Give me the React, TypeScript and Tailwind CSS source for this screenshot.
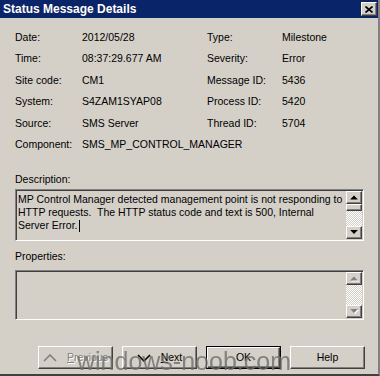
const font = "font-['Liberation_Sans',Arial,sans-serif]";

const raised =
  'border border-t-white border-l-white border-r-[#404040] border-b-[#404040] shadow-[inset_-1px_-1px_0_#808080]';
const sunken =
  'border border-t-[#808080] border-l-[#808080] border-r-white border-b-white shadow-[inset_1px_1px_0_#404040,inset_-1px_-1px_0_#d4d0c8]';
const dither =
  'bg-[repeating-conic-gradient(#ffffff_0%_25%,#d4d0c8_0%_50%)] bg-[length:2px_2px]';

type Row = { label: string; value: string; label2?: string; value2?: string };

const rows: Row[] = [
  { label: 'Date:', value: '2012/05/28', label2: 'Type:', value2: 'Milestone' },
  { label: 'Time:', value: '08:37:29.677 AM', label2: 'Severity:', value2: 'Error' },
  { label: 'Site code:', value: 'CM1', label2: 'Message ID:', value2: '5436' },
  { label: 'System:', value: 'S4ZAM1SYAP08', label2: 'Process ID:', value2: '5420' },
  { label: 'Source:', value: 'SMS Server', label2: 'Thread ID:', value2: '5704' },
];

function Arrow({ dir, enabled }: { dir: 'up' | 'down'; enabled: boolean }) {
  const points = dir === 'up' ? '0,4 3.5,0.5 7,4' : '0,0 3.5,3.5 7,0';
  return (
    <div className={`flex h-[13px] w-full items-center justify-center bg-[#d4d0c8] ${raised}`}>
      <svg width="8" height="5" viewBox="0 0 7 4.5" className="overflow-visible">
        {!enabled && <polygon points={points} fill="#ffffff" transform="translate(1,1)" />}
        <polygon points={points} fill={enabled ? '#000000' : '#808080'} />
      </svg>
    </div>
  );
}

function ScrollBar({ enabled }: { enabled: boolean }) {
  return (
    <div className="flex w-[16px] flex-col">
      <Arrow dir="up" enabled={enabled} />
      {enabled && <div className={`h-[7px] bg-[#d4d0c8] ${raised}`} />}
      <div className={`flex-1 ${dither}`} />
      <Arrow dir="down" enabled={enabled} />
    </div>
  );
}

function Chevron({ dir, color }: { dir: 'up' | 'down'; color: string }) {
  const pts = dir === 'up' ? '1,7 7,1 13,7' : '1,1 7,7 13,1';
  return (
    <svg width="14" height="8" viewBox="0 0 14 8">
      <polyline points={pts} fill="none" stroke={color} strokeWidth="1.6" />
    </svg>
  );
}

function Button({ children, isDefault }: { children: React.ReactNode; isDefault?: boolean }) {
  return (
    <div className={`h-[23px] w-[75px] ${isDefault ? 'border border-black' : ''}`}>
      <div className={`flex h-full w-full items-center justify-center gap-[10px] bg-[#d4d0c8] ${raised}`}>
        {children}
      </div>
    </div>
  );
}

export default function App() {
  return (
    <div
      className={`relative h-[376px] w-[380px] overflow-hidden border-r-2 border-b-2 border-r-[#808080] border-b-[#404040] bg-[#d4d0c8] text-[10.5px] text-black ${font}`}
    >
      {/* Title bar */}
      <div className="flex h-[18px] items-center justify-between bg-[#0a246a] pr-[1px] pl-[3px]">
        <span className="text-[12px] font-bold text-white">Status Message Details</span>
        <div className={`flex h-[14px] w-[16px] items-center justify-center bg-[#d4d0c8] ${raised}`}>
          <svg width="8" height="7" viewBox="0 0 8 7">
            <path d="M0.5 0.5 L7.5 6.5 M7.5 0.5 L0.5 6.5" stroke="#000" strokeWidth="1.7" />
          </svg>
        </div>
      </div>

      <div className="pt-[9px] pl-[15px]">
        {/* Fields */}
        <div className="grid grid-cols-[67px_125px_75px_1fr]">
          {rows.map((r) => (
            <div key={r.label} className="contents">
              <div className="flex h-[21.5px] items-center">{r.label}</div>
              <div className="flex h-[21.5px] items-center">{r.value}</div>
              <div className="flex h-[21.5px] items-center">{r.label2}</div>
              <div className="flex h-[21.5px] items-center">{r.value2}</div>
            </div>
          ))}
          <div className="flex h-[21.5px] items-center">Component:</div>
          <div className="col-span-3 flex h-[21.5px] items-center">SMS_MP_CONTROL_MANAGER</div>
        </div>

        {/* Description */}
        <div className="mt-[17px] leading-[13px]">Description:</div>
        <div className={`mt-[3px] flex h-[52px] w-[349px] p-[1px] ${sunken}`}>
          <div className="flex-1 pt-[2px] pl-[1px] leading-[13px]">
            <div>MP Control Manager detected management point is not responding to</div>
            <div className="whitespace-pre">HTTP requests.  The HTTP status code and text is 500, Internal</div>
            <div className="flex items-center">
              Server Error.
              <span className="ml-[1px] inline-block h-[12px] w-[1px] bg-black" />
            </div>
          </div>
          <ScrollBar enabled />
        </div>

        {/* Properties */}
        <div className="mt-[9px] leading-[13px]">Properties:</div>
        <div className={`mt-[7px] flex h-[50px] w-[349px] p-[1px] ${sunken}`}>
          <div className="flex-1" />
          <ScrollBar enabled={false} />
        </div>

        {/* Buttons */}
        <div className="mt-[26px] ml-[23px] flex gap-[9px]">
          <Button>
            <Chevron dir="up" color="#808080" />
            <span className="text-[#808080] [text-shadow:1px_1px_0_#ffffff]">
              <span className="underline">P</span>revious
            </span>
          </Button>
          <Button>
            <Chevron dir="down" color="#000000" />
            <span>
              <span className="underline">N</span>ext
            </span>
          </Button>
          <Button isDefault>OK</Button>
          <Button>Help</Button>
        </div>
      </div>

      {/* Watermark */}
      <div className="pointer-events-none absolute top-[349px] left-[77px] text-[25px] leading-none text-[#6e6e6e] opacity-80">
        windows-noob.com
      </div>
    </div>
  );
}
